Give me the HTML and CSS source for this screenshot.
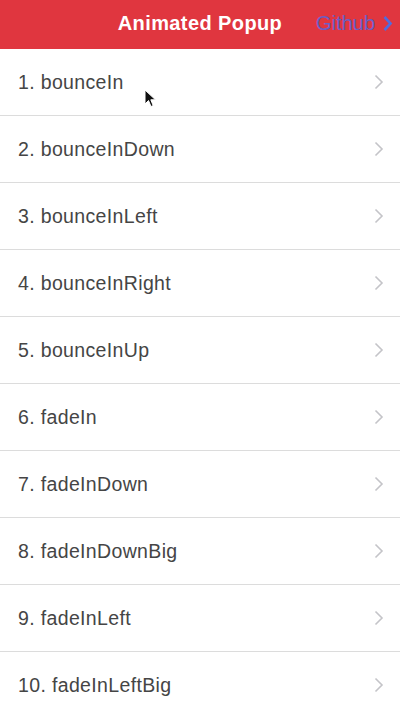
FILE: index.html
```html
<!DOCTYPE html>
<html>
<head>
<meta charset="utf-8">
<link rel="stylesheet" href="styles.css">
</head>
<body>
<header class="bar">
  <h1 class="title">Animated Popup</h1>
  <a class="github">Github<svg class="gh-chev" width="11" height="17" viewBox="0 0 11 17"><path d="M2.5 2 L8.5 8.5 L2.5 15" fill="none" stroke="#4f6be0" stroke-width="2.6"/></svg></a>
</header>
<ul class="list">
  <li class="row"><span>1. bounceIn</span><svg class="chev" width="10" height="16" viewBox="0 0 10 16"><path d="M1.5 1.5 L8 8 L1.5 14.5" fill="none" stroke="#c4c4c8" stroke-width="1.6"/></svg></li>
  <li class="row"><span>2. bounceInDown</span><svg class="chev" width="10" height="16" viewBox="0 0 10 16"><path d="M1.5 1.5 L8 8 L1.5 14.5" fill="none" stroke="#c4c4c8" stroke-width="1.6"/></svg></li>
  <li class="row"><span>3. bounceInLeft</span><svg class="chev" width="10" height="16" viewBox="0 0 10 16"><path d="M1.5 1.5 L8 8 L1.5 14.5" fill="none" stroke="#c4c4c8" stroke-width="1.6"/></svg></li>
  <li class="row"><span>4. bounceInRight</span><svg class="chev" width="10" height="16" viewBox="0 0 10 16"><path d="M1.5 1.5 L8 8 L1.5 14.5" fill="none" stroke="#c4c4c8" stroke-width="1.6"/></svg></li>
  <li class="row"><span>5. bounceInUp</span><svg class="chev" width="10" height="16" viewBox="0 0 10 16"><path d="M1.5 1.5 L8 8 L1.5 14.5" fill="none" stroke="#c4c4c8" stroke-width="1.6"/></svg></li>
  <li class="row"><span>6. fadeIn</span><svg class="chev" width="10" height="16" viewBox="0 0 10 16"><path d="M1.5 1.5 L8 8 L1.5 14.5" fill="none" stroke="#c4c4c8" stroke-width="1.6"/></svg></li>
  <li class="row"><span>7. fadeInDown</span><svg class="chev" width="10" height="16" viewBox="0 0 10 16"><path d="M1.5 1.5 L8 8 L1.5 14.5" fill="none" stroke="#c4c4c8" stroke-width="1.6"/></svg></li>
  <li class="row"><span>8. fadeInDownBig</span><svg class="chev" width="10" height="16" viewBox="0 0 10 16"><path d="M1.5 1.5 L8 8 L1.5 14.5" fill="none" stroke="#c4c4c8" stroke-width="1.6"/></svg></li>
  <li class="row"><span>9. fadeInLeft</span><svg class="chev" width="10" height="16" viewBox="0 0 10 16"><path d="M1.5 1.5 L8 8 L1.5 14.5" fill="none" stroke="#c4c4c8" stroke-width="1.6"/></svg></li>
  <li class="row"><span>10. fadeInLeftBig</span><svg class="chev" width="10" height="16" viewBox="0 0 10 16"><path d="M1.5 1.5 L8 8 L1.5 14.5" fill="none" stroke="#c4c4c8" stroke-width="1.6"/></svg></li>
</ul>
<svg class="cursor" width="14" height="20" viewBox="0 0 14 20"><path d="M1 1 L1 15 L4.5 11.5 L7 17.5 L9.2 16.6 L6.8 10.8 L11.5 10.8 Z" fill="#111" stroke="#fff" stroke-width="1"/></svg>
</body>
</html>
```
FILE: styles.css
```css
html, body {
  margin: 0;
  padding: 0;
  background: #fff;
  font-family: "Liberation Sans", Arial, sans-serif;
  width: 400px;
  height: 711px;
  overflow: hidden;
  position: relative;
}
.bar {
  height: 49px;
  background: #e0363f;
  display: flex;
  align-items: center;
  justify-content: center;
  position: relative;
}
.title {
  margin: 0 0 2px 0;
  color: #fff;
  font-size: 20px;
  font-weight: bold;
  letter-spacing: 0.4px;
}
.github {
  position: absolute;
  right: 7px;
  top: 0;
  height: 46px;
  display: flex;
  align-items: center;
  gap: 7px;
  color: #6a5ec6;
  font-size: 20.5px;
  letter-spacing: -0.2px;
}
.gh-chev { display: block; }
.list {
  list-style: none;
  margin: 0;
  padding: 0;
}
.row {
  height: 66px;
  border-bottom: 1px solid #dcdcdc;
  display: flex;
  align-items: center;
  justify-content: space-between;
  padding: 0 16px 0 18px;
  color: #454545;
  font-size: 19.5px;
  letter-spacing: 0.35px;
}
.chev { display: block; }
.cursor {
  position: absolute;
  left: 144px;
  top: 89px;
}
```
